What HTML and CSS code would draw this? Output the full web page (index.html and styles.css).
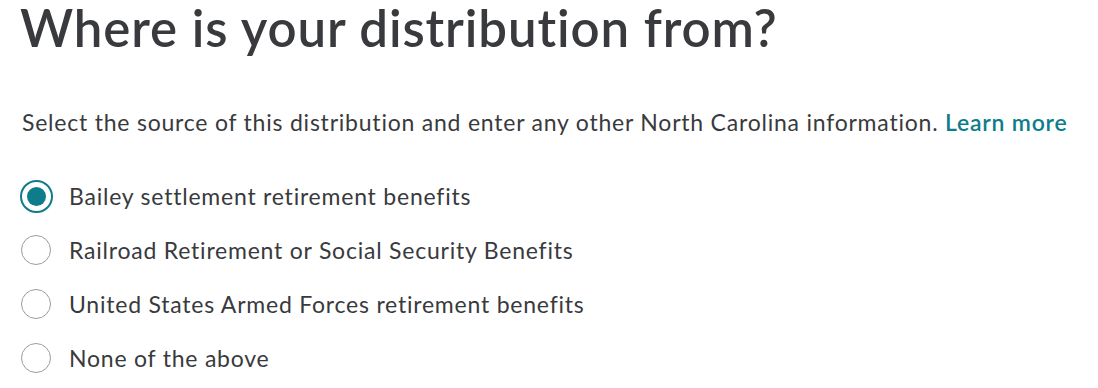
FILE: index.html
```html
<!DOCTYPE html>
<html lang="en">
<head>
<meta charset="utf-8">
<title>Where is your distribution from?</title>
<link rel="stylesheet" href="styles.css">
</head>
<body>
<main class="page">
  <h1 class="title">Where is your distribution from?</h1>
  <p class="intro">Select the source of this distribution and enter any other North Carolina information. <a class="link" href="#">Learn more</a></p>
  <div class="options" role="radiogroup">
    <label class="option">
      <span class="radio radio--checked"><span class="radio-dot"></span></span>
      <span class="option-text">Bailey settlement retirement benefits</span>
    </label>
    <label class="option">
      <span class="radio"></span>
      <span class="option-text">Railroad Retirement or Social Security Benefits</span>
    </label>
    <label class="option">
      <span class="radio"></span>
      <span class="option-text">United States Armed Forces retirement benefits</span>
    </label>
    <label class="option">
      <span class="radio"></span>
      <span class="option-text">None of the above</span>
    </label>
  </div>
</main>
</body>
</html>
```

FILE: styles.css
```css
html, body {
  margin: 0;
  padding: 0;
  background: #ffffff;
}

body {
  font-family: "Lato", "Noto Sans", sans-serif;
  color: #393a3d;
  font-variant-ligatures: none;
}

.page {
  padding: 0 0 0 20px;
}

.title {
  margin: 0;
  font-size: 51px;
  line-height: 55px;
  font-weight: 600;
  color: #393a3d;
  letter-spacing: 0.9px;
}

.intro {
  margin: 51px 0 0 2px;
  font-size: 23px;
  line-height: 32px;
  font-weight: 400;
  letter-spacing: 0.78px;
}

.link {
  color: #0d7d8c;
  font-weight: 600;
  text-decoration: none;
}

.options {
  display: flex;
  flex-direction: column;
  gap: 22px;
  margin-top: 42px;
}

.option {
  display: flex;
  align-items: center;
  gap: 17px;
  height: 32px;
  font-size: 23px;
  letter-spacing: 0.78px;
}

.radio {
  flex: 0 0 auto;
  box-sizing: border-box;
  width: 30px;
  height: 30px;
  margin: 0 1px;
  border: 1.5px solid #9a9ca0;
  border-radius: 50%;
  display: flex;
  align-items: center;
  justify-content: center;
}

.radio--checked {
  width: 33px;
  height: 33px;
  margin: 0 -0.5px;
  border: 2px solid #0d7d8c;
}

.radio-dot {
  width: 19px;
  height: 19px;
  border-radius: 50%;
  background: #0d7d8c;
}

.option-text {
  line-height: 32px;
}
```
